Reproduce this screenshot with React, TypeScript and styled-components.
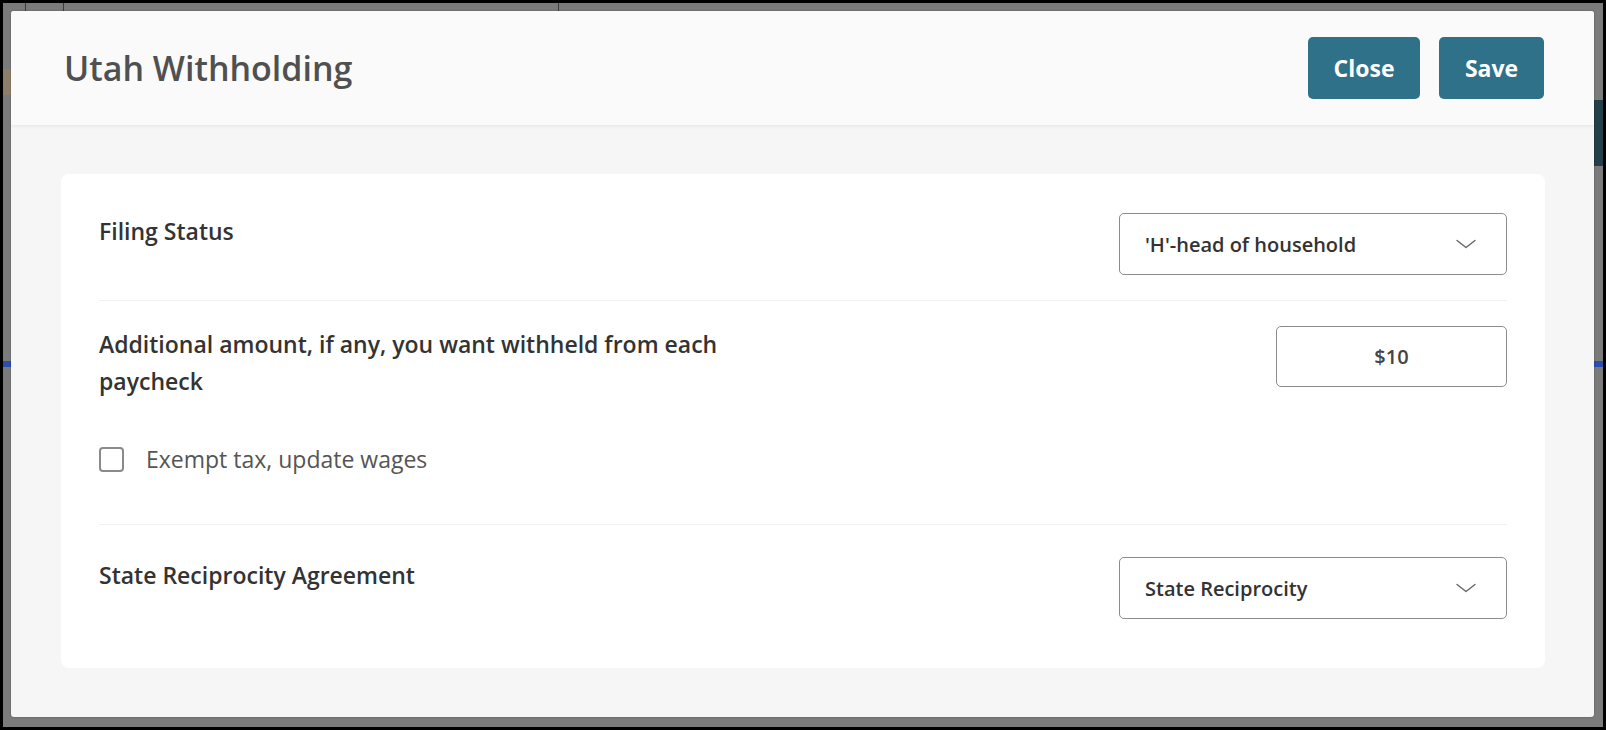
import React, { useState } from "react";
import styled, { createGlobalStyle } from "styled-components";

const GlobalStyle = createGlobalStyle`
  html, body {
    margin: 0;
    padding: 0;
    background: #000;
  }
  body {
    font-family: "Open Sans", Lato, "Liberation Sans", sans-serif;
  }
  * {
    box-sizing: border-box;
  }
`;

const Frame = styled.div`
  width: 1606px;
  height: 730px;
  padding: 3px;
  background: #000;
`;

const Backdrop = styled.div`
  position: relative;
  height: 100%;
  background: #7b7b7b;
  padding: 8px 9px 10px 8px;
  overflow: hidden;
`;

// bits of the dimmed page peeking out around the modal
const PageLine = styled.div<{ $left: number }>`
  position: absolute;
  top: 0;
  left: ${(p) => p.$left}px;
  width: 1px;
  height: 10px;
  background: #3c3c3c;
`;

const PageBlock = styled.div<{ $side: "left" | "right"; $top: number; $h: number; $bg: string }>`
  position: absolute;
  ${(p) => p.$side}: 0;
  top: ${(p) => p.$top}px;
  width: 9px;
  height: ${(p) => p.$h}px;
  background: ${(p) => p.$bg};
`;

const Modal = styled.div`
  position: relative;
  height: 100%;
  display: flex;
  flex-direction: column;
  background: #f6f6f6;
  border-radius: 3px;
  box-shadow: 0 0 2px rgba(0, 0, 0, 0.35);
  overflow: hidden;
`;

const Header = styled.div`
  flex: none;
  display: flex;
  align-items: center;
  justify-content: space-between;
  height: 114px;
  padding: 0 50px 0 53px;
  background: #fafafa;
  box-shadow: 0 1px 4px rgba(0, 0, 0, 0.08);
  z-index: 1;
`;

const Title = styled.h1`
  margin: 0;
  font-size: 34px;
  font-weight: 600;
  color: #505050;
`;

const Actions = styled.div`
  display: flex;
  gap: 19px;
`;

const ActionButton = styled.button<{ $width: number }>`
  width: ${(p) => p.$width}px;
  height: 62px;
  border: none;
  border-radius: 5px;
  background: #2e7189;
  color: #fff;
  font-family: inherit;
  font-size: 23px;
  font-weight: 700;
  cursor: pointer;
`;

const Body = styled.div`
  flex: 1;
  padding: 49px 49px 50px 50px;
`;

const Card = styled.div`
  background: #fff;
  border-radius: 8px;
  padding: 39px 38px 49px 38px;
`;

const Row = styled.div<{ $pt: number; $pb: number; $divider?: boolean }>`
  display: flex;
  justify-content: space-between;
  align-items: flex-start;
  padding-top: ${(p) => p.$pt}px;
  padding-bottom: ${(p) => p.$pb}px;
  border-bottom: ${(p) => (p.$divider ? "1px solid #f1f1f1" : "none")};
`;

const LabelCol = styled.div`
  display: flex;
  flex-direction: column;
`;

const Label = styled.div`
  max-width: 640px;
  font-size: 23px;
  line-height: 37px;
  font-weight: 600;
  color: #333;
`;

const CheckRow = styled.label`
  display: flex;
  align-items: center;
  gap: 22px;
  margin-top: 43px;
  font-size: 23px;
  color: #555;
  cursor: pointer;
`;

const Box = styled.span<{ $checked: boolean }>`
  flex: none;
  width: 25px;
  height: 25px;
  border: 2px solid #8a8a8a;
  border-radius: 4px;
  background: ${(p) => (p.$checked ? "#2e7189" : "#fff")};
`;

const Select = styled.div`
  display: flex;
  align-items: center;
  justify-content: space-between;
  width: 388px;
  height: 62px;
  padding: 0 30px 0 25px;
  border: 1px solid #8c8c8c;
  border-radius: 5px;
  font-size: 20px;
  font-weight: 600;
  color: #333;
  cursor: pointer;
`;

const Amount = styled.div`
  display: flex;
  align-items: center;
  justify-content: center;
  width: 231px;
  height: 61px;
  border: 1px solid #8c8c8c;
  border-radius: 5px;
  font-size: 20px;
  font-weight: 600;
  color: #444;
`;

const Chevron = () => (
  <svg width="20" height="10" viewBox="0 0 20 10" fill="none">
    <polyline points="1,1.5 10,8.5 19,1.5" stroke="#666" strokeWidth="1.4" strokeLinecap="round" strokeLinejoin="round" />
  </svg>
);

export default function App() {
  const [exempt, setExempt] = useState(false);

  return (
    <>
      <GlobalStyle />
      <Frame>
        <Backdrop>
          <PageLine $left={22} />
          <PageLine $left={60} />
          <PageLine $left={555} />
          <PageBlock $side="left" $top={66} $h={26} $bg="#8c806a" />
          <PageBlock $side="right" $top={97} $h={66} $bg="#233f49" />
          <PageBlock $side="left" $top={358} $h={6} $bg="#2a4fb0" />
          <PageBlock $side="right" $top={358} $h={6} $bg="#2a4fb0" />
          <Modal>
            <Header>
              <Title>Utah Withholding</Title>
              <Actions>
                <ActionButton $width={112}>Close</ActionButton>
                <ActionButton $width={105}>Save</ActionButton>
              </Actions>
            </Header>
            <Body>
              <Card>
                <Row $pt={0} $pb={25} $divider>
                  <Label>Filing Status</Label>
                  <Select>
                    <span>'H'-head of household</span>
                    <Chevron />
                  </Select>
                </Row>
                <Row $pt={25} $pb={49} $divider>
                  <LabelCol>
                    <Label>Additional amount, if any, you want withheld from each paycheck</Label>
                    <CheckRow onClick={() => setExempt(!exempt)}>
                      <Box $checked={exempt} />
                      Exempt tax, update wages
                    </CheckRow>
                  </LabelCol>
                  <Amount>$10</Amount>
                </Row>
                <Row $pt={32} $pb={0}>
                  <Label>State Reciprocity Agreement</Label>
                  <Select>
                    <span>State Reciprocity</span>
                    <Chevron />
                  </Select>
                </Row>
              </Card>
            </Body>
          </Modal>
        </Backdrop>
      </Frame>
    </>
  );
}
